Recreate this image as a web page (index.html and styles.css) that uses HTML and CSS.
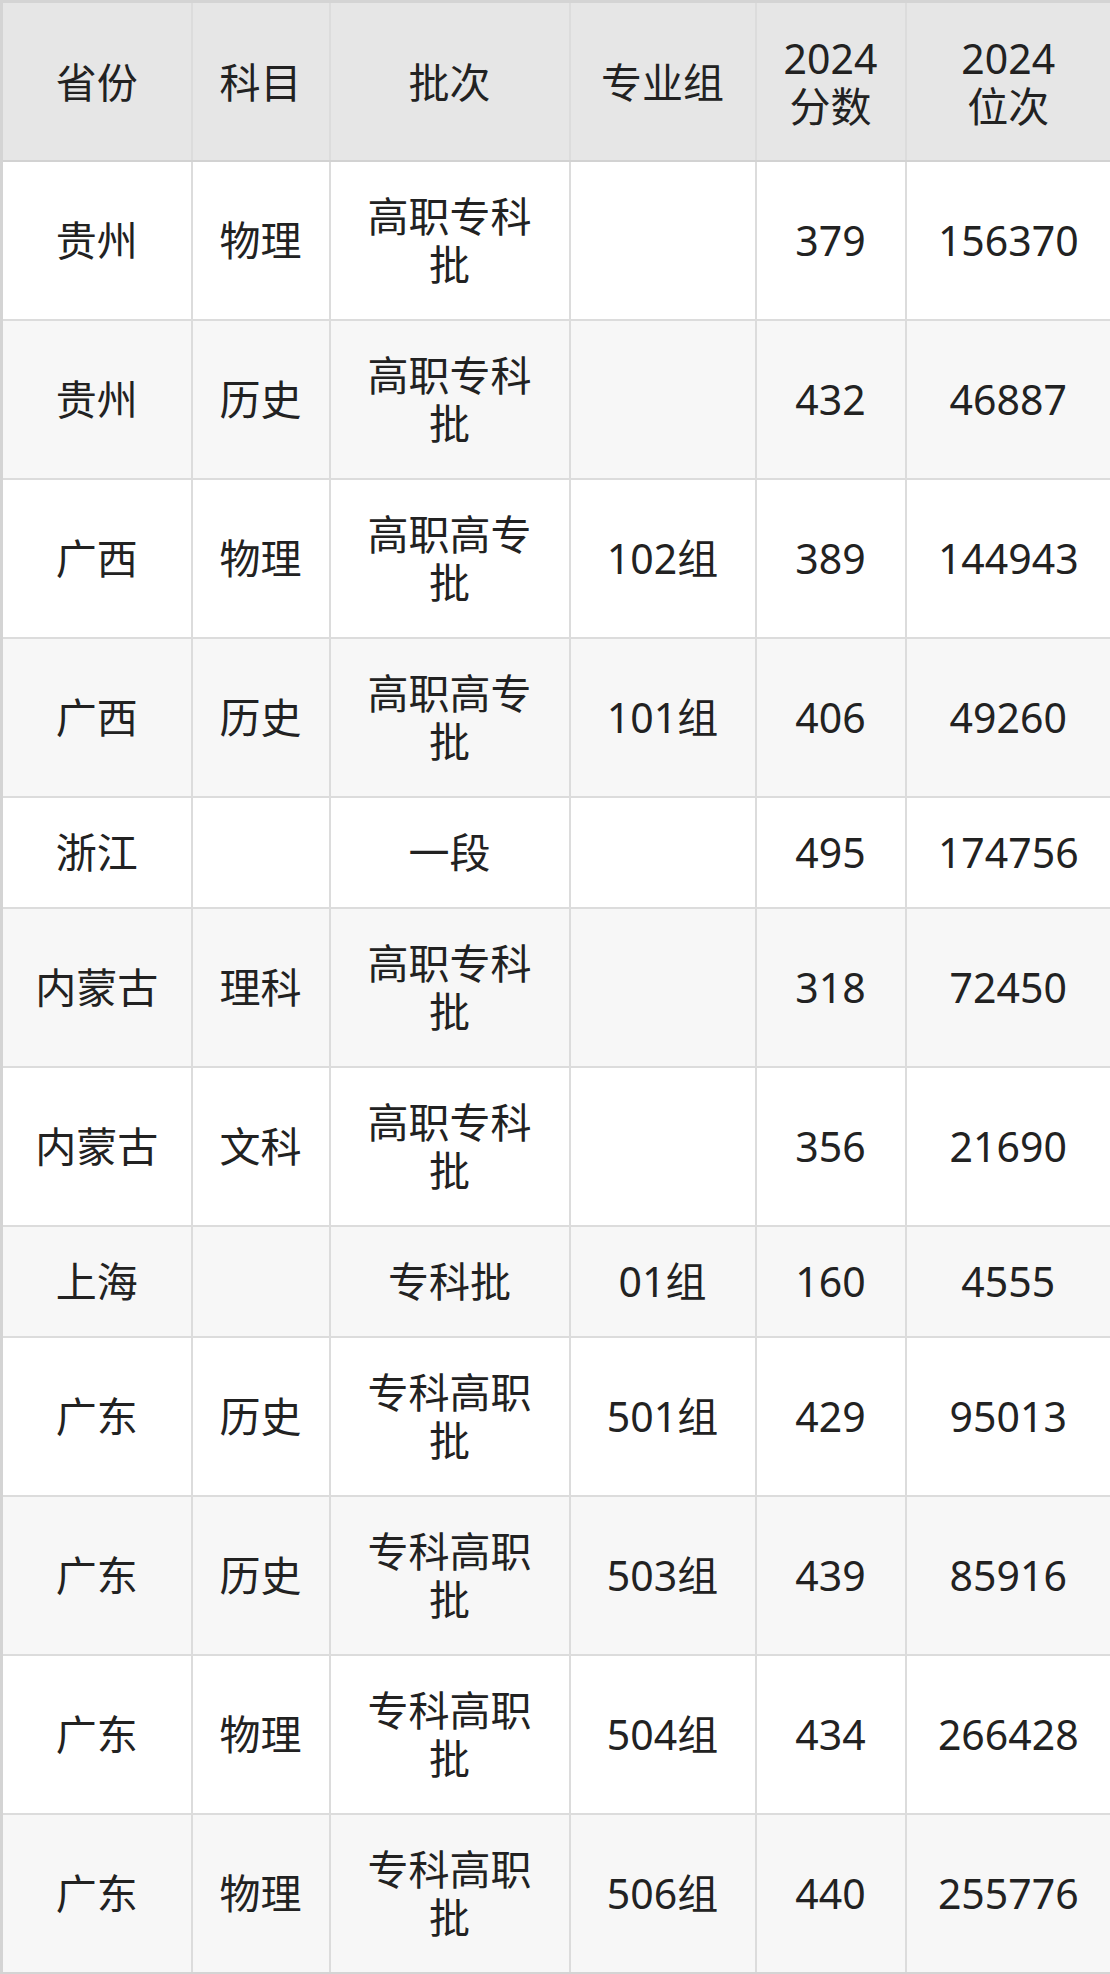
FILE: index.html
```html
<!DOCTYPE html>
<html lang="zh-CN">
<head>
<meta charset="utf-8">
<title>2024 分数位次</title>
<link rel="stylesheet" href="styles.css">
</head>
<body>
<table class="score-table">
  <colgroup>
    <col class="c-prov">
    <col class="c-subj">
    <col class="c-batch">
    <col class="c-group">
    <col class="c-score">
    <col class="c-rank">
  </colgroup>
  <thead>
    <tr>
      <th>省份</th>
      <th>科目</th>
      <th>批次</th>
      <th>专业组</th>
      <th>2024<br>分数</th>
      <th>2024<br>位次</th>
    </tr>
  </thead>
  <tbody>
    <tr><td>贵州</td><td>物理</td><td>高职专科批</td><td></td><td>379</td><td>156370</td></tr>
    <tr><td>贵州</td><td>历史</td><td>高职专科批</td><td></td><td>432</td><td>46887</td></tr>
    <tr><td>广西</td><td>物理</td><td>高职高专批</td><td>102组</td><td>389</td><td>144943</td></tr>
    <tr><td>广西</td><td>历史</td><td>高职高专批</td><td>101组</td><td>406</td><td>49260</td></tr>
    <tr><td>浙江</td><td></td><td>一段</td><td></td><td>495</td><td>174756</td></tr>
    <tr><td>内蒙古</td><td>理科</td><td>高职专科批</td><td></td><td>318</td><td>72450</td></tr>
    <tr><td>内蒙古</td><td>文科</td><td>高职专科批</td><td></td><td>356</td><td>21690</td></tr>
    <tr><td>上海</td><td></td><td>专科批</td><td>01组</td><td>160</td><td>4555</td></tr>
    <tr><td>广东</td><td>历史</td><td>专科高职批</td><td>501组</td><td>429</td><td>95013</td></tr>
    <tr><td>广东</td><td>历史</td><td>专科高职批</td><td>503组</td><td>439</td><td>85916</td></tr>
    <tr><td>广东</td><td>物理</td><td>专科高职批</td><td>504组</td><td>434</td><td>266428</td></tr>
    <tr><td>广东</td><td>物理</td><td>专科高职批</td><td>506组</td><td>440</td><td>255776</td></tr>
  </tbody>
</table>
</body>
</html>
```
FILE: styles.css
```css
html, body {
  margin: 0;
  padding: 0;
  background: #ffffff;
}

.score-table {
  width: 1110px;
  table-layout: fixed;
  border-collapse: collapse;
  border: 3px solid #d4d4d4;
  font-family: "Noto Sans", "Noto Sans CJK SC", sans-serif;
  font-size: 41px;
  line-height: 48px;
  color: #222222;
}

.c-prov { width: 190px; }
.c-subj { width: 138px; }
.c-batch { width: 240px; }
.c-group { width: 186px; }
.c-score { width: 150px; }
.c-rank { width: 206px; }

.score-table th,
.score-table td {
  border: 2px solid #dcdcdc;
  padding: 30px 18px 31px;
  text-align: center;
  vertical-align: middle;
  font-weight: normal;
}

.score-table th {
  padding-top: 30.5px;
  padding-bottom: 30.5px;
  background: #e6e6e6;
  border-bottom-color: #d2d2d2;
}

.score-table tbody tr:nth-child(even) td {
  background: #f7f7f7;
}
```
